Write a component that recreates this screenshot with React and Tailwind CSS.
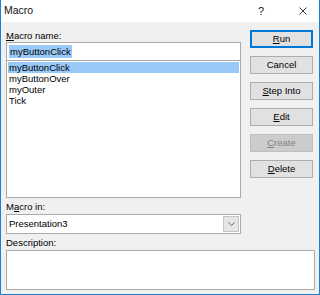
import React from "react";

const font = { fontFamily: '"Liberation Sans", Arial, sans-serif' };

function Btn({ children, primary, disabled }) {
  return (
    <div
      className={`h-[18px] flex items-center justify-center text-[9.5px] leading-none ${
        primary
          ? "border-2 border-[#0078d7] bg-[#e1e1e1] text-black"
          : disabled
          ? "border border-[#bfbfbf] bg-[#cccccc] text-[#838383]"
          : "border border-[#adadad] bg-[#e1e1e1] text-black"
      }`}
    >
      {children}
    </div>
  );
}

export default function App() {
  const macros = ["myButtonClick", "myButtonOver", "myOuter", "Tick"];

  return (
    <div
      style={font}
      className="w-[320px] h-[295px] bg-[#f0f0f0] border-x border-b border-[#1c7fd6] flex flex-col text-black"
    >
      {/* title bar */}
      <div className="h-[22px] bg-white flex items-center pl-[3px] pr-[12px] shrink-0">
        <span className="text-[10.5px] text-[#111]">Macro</span>
        <span className="ml-auto text-[11px] text-[#222]">?</span>
        <svg width="8" height="8" viewBox="0 0 8 8" className="ml-[35px]">
          <path d="M0.5 0.5 L7.5 7.5 M7.5 0.5 L0.5 7.5" stroke="#222" strokeWidth="0.9" />
        </svg>
      </div>

      <div className="flex pl-[5px] pt-[8px] gap-[9px]">
        {/* left column */}
        <div className="w-[235px] flex flex-col">
          <div className="h-[12px] text-[9.5px] leading-[12px]">
            <span className="underline">M</span>acro name:
          </div>
          <div className="h-[19px] border border-[#ababab] bg-white flex items-center px-[2px]">
            <span className="bg-[#99c9f7] text-[9.5px] leading-[13px] px-[1px]">myButtonClick</span>
          </div>
          <div className="h-[137px] border-x border-b border-[#ababab] bg-white pt-[1px] px-[1px]">
            {macros.map((m, i) => (
              <div
                key={m}
                className={`h-[11px] text-[9.5px] leading-[11px] pl-[1px] ${
                  i === 0 ? "bg-[#99c9f7]" : ""
                }`}
              >
                {m}
              </div>
            ))}
          </div>
          <div className="h-[16px] text-[9.5px] leading-[12px] pt-[3px]">
            M<span className="underline">a</span>cro in:
          </div>
          <div className="h-[20px] border border-[#ababab] bg-white flex items-center pl-[2px] pr-[1px]">
            <span className="text-[9.5px] leading-none">Presentation3</span>
            <div className="ml-auto w-[16px] h-[16px] bg-[#e6e6e6] border border-[#c4c4c4] flex items-center justify-center">
              <svg width="7" height="4" viewBox="0 0 7 4">
                <path d="M0.5 0.5 L3.5 3.5 L6.5 0.5" fill="none" stroke="#606060" strokeWidth="1" />
              </svg>
            </div>
          </div>
        </div>

        {/* buttons */}
        <div className="w-[63px] flex flex-col gap-[8px]">
          <Btn primary>
            <span className="underline">R</span>un
          </Btn>
          <Btn>Cancel</Btn>
          <Btn>
            <span className="underline">S</span>tep Into
          </Btn>
          <Btn>
            <span className="underline">E</span>dit
          </Btn>
          <Btn disabled>
            <span className="underline">C</span>reate
          </Btn>
          <Btn>
            <span className="underline">D</span>elete
          </Btn>
        </div>
      </div>

      <div className="pl-[5px] pr-[4px] flex flex-col">
        <div className="h-[16px] text-[9.5px] leading-[12px] pt-[3px]">Description:</div>
        <div className="h-[40px] border border-[#ababab] bg-white"></div>
      </div>
    </div>
  );
}
